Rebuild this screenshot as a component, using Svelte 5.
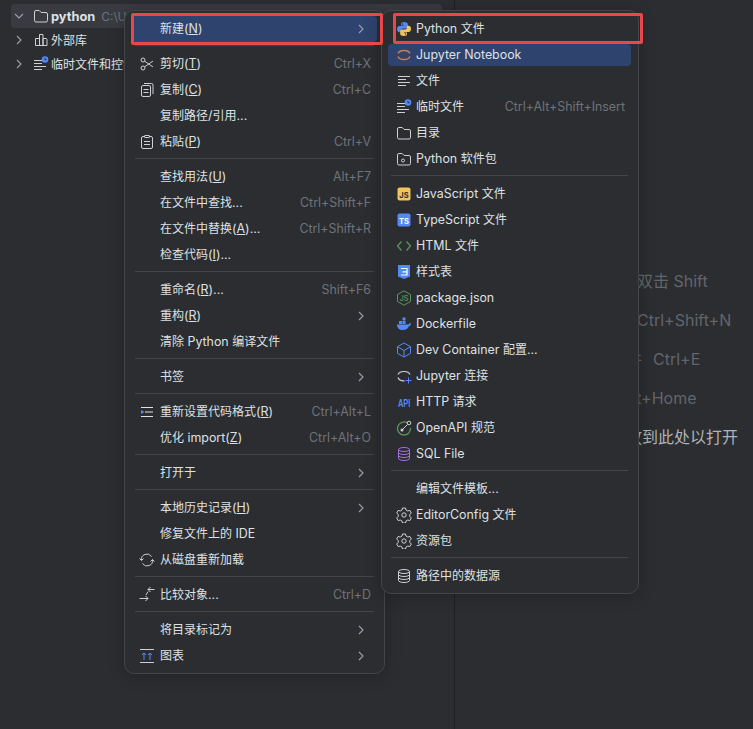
<script>
  const main = [
    [{ label: '新建', key: 'N', sub: true, active: true }],
    [
      { label: '剪切', key: 'T', icon: 'cut', hint: 'Ctrl+X' },
      { label: '复制', key: 'C', icon: 'copy', hint: 'Ctrl+C' },
      { label: '复制路径/引用...' },
      { label: '粘贴', key: 'P', icon: 'paste', hint: 'Ctrl+V' },
    ],
    [
      { label: '查找用法', key: 'U', hint: 'Alt+F7' },
      { label: '在文件中查找...', hint: 'Ctrl+Shift+F' },
      { label: '在文件中替换', key: 'A', tail: '...', hint: 'Ctrl+Shift+R' },
      { label: '检查代码', key: 'I', tail: '...' },
    ],
    [
      { label: '重命名', key: 'R', tail: '...', hint: 'Shift+F6' },
      { label: '重构', key: 'R', sub: true },
      { label: '清除 Python 编译文件' },
    ],
    [{ label: '书签', sub: true }],
    [
      { label: '重新设置代码格式', key: 'R', icon: 'format', hint: 'Ctrl+Alt+L' },
      { label: '优化 import', key: 'Z', hint: 'Ctrl+Alt+O' },
    ],
    [{ label: '打开于', sub: true }],
    [
      { label: '本地历史记录', key: 'H', sub: true },
      { label: '修复文件上的 IDE' },
      { label: '从磁盘重新加载', icon: 'reload' },
    ],
    [{ label: '比较对象...', icon: 'diff', hint: 'Ctrl+D' }],
    [
      { label: '将目录标记为', sub: true },
      { label: '图表', icon: 'diagram', sub: true },
    ],
  ];

  const create = [
    [
      { label: 'Python 文件', icon: 'python' },
      { label: 'Jupyter Notebook', icon: 'jupyter', active: true },
      { label: '文件', icon: 'file' },
      { label: '临时文件', icon: 'scratch', hint: 'Ctrl+Alt+Shift+Insert' },
      { label: '目录', icon: 'folder' },
      { label: 'Python 软件包', icon: 'package' },
    ],
    [
      { label: 'JavaScript 文件', icon: 'js' },
      { label: 'TypeScript 文件', icon: 'ts' },
      { label: 'HTML 文件', icon: 'html' },
      { label: '样式表', icon: 'css' },
      { label: 'package.json', icon: 'node' },
      { label: 'Dockerfile', icon: 'docker' },
      { label: 'Dev Container 配置...', icon: 'cube' },
      { label: 'Jupyter 连接', icon: 'jupyterAdd' },
      { label: 'HTTP 请求', icon: 'api' },
      { label: 'OpenAPI 规范', icon: 'openapi' },
      { label: 'SQL File', icon: 'sql' },
    ],
    [
      { label: '编辑文件模板...' },
      { label: 'EditorConfig 文件', icon: 'gear' },
      { label: '资源包', icon: 'gear' },
    ],
    [{ label: '路径中的数据源', icon: 'db' }],
  ];

  const tips = [
    { name: '随处搜索', key: '双击 Shift' },
    { name: '转到文件', key: 'Ctrl+Shift+N' },
    { name: '最近的文件', key: 'Ctrl+E' },
    { name: '导航栏', key: 'Alt+Home' },
  ];

  // the Han glyphs sit at a slightly smaller size than the Latin ones
  const runs = (text) => text.split(/([\u4e00-\u9fff]+)/).filter(Boolean);
  const isHan = (run) => /[\u4e00-\u9fff]/.test(run);
</script>

{#snippet mixed(text)}
  {#each runs(text) as run}{#if isHan(run)}<span class="han">{run}</span>{:else}{run}{/if}{/each}
{/snippet}

{#snippet icon(name)}
  <svg class="icon" viewBox="0 0 16 16" width="16" height="16" fill="none" stroke="#ced0d6" stroke-width="1">
    {#if name === 'cut'}
      <circle cx="4" cy="4" r="2"/><circle cx="4" cy="12" r="2"/><path d="M5.6 5.2 14 11M5.6 10.8 14 5"/>
    {:else if name === 'copy'}
      <rect x="2.5" y="3.5" width="9" height="11" rx="1.5"/><path d="M5 1.5h7.5A1.5 1.5 0 0 1 14 3v9M4.500 7.500h5M4.500 10.500h5"/>
    {:else if name === 'paste'}
      <rect x="2.5" y="2.5" width="11" height="12" rx="1.5"/><rect x="5.5" y="1.5" width="5" height="2" rx="0.5" fill="#2b2d30"/><path d="M5 7.500h6M5 10.500h6"/>
    {:else if name === 'format'}
      <path d="M2 3.500h12M6 8h8M2 12.500h12" stroke="#dfe1e5"/><path d="M2 6v4l3.500-2z" fill="#548af7" stroke="none"/>
    {:else if name === 'reload'}
      <path d="M2.500 8.500A5.500 5.500 0 0 1 12.500 4.500M13.500 7.500A5.500 5.500 0 0 1 3.500 11.500"/><path d="M.5 6.500l2 2 2-2M11.500 9.500l2-2 2 2"/>
    {:else if name === 'diff'}
      <path d="M15.500 2.500H9M11.500 0 9 2.500 11.500 5M.5 11.500H9M6.500 9 9 11.500 6.500 14M7 8l2-3.500"/>
    {:else if name === 'diagram'}
      <path d="M1 1.500h14M1 14.500h14"/><path d="M5 12V5M3 7l2-2 2 2M11 12V5M9 7l2-2 2 2" stroke="#548af7"/>
    {:else if name === 'python'}
      <path d="M8 1C5.500 1 5 2 5 3v1.500h3.200V5H3.500C2 5 1 6 1 8s1 3.200 2.300 3.200H5V9.500C5 8.300 6 7.500 7 7.500h3c1 0 1.800-.8 1.800-1.800V3c0-1-1.300-2-3.800-2z" fill="#548af7" stroke="none"/>
      <path d="M8 15c2.500 0 3-1 3-2v-1.500H7.800V11h4.700c1.500 0 2.500-1 2.500-3s-1-3.200-2.300-3.200H11v1.700c0 1.200-1 2-2 2H6c-1 0-1.800.8-1.800 1.800V13c0 1 1.300 2 3.800 2z" fill="#f2c55c" stroke="none"/>
      <circle cx="6.500" cy="3" r=".7" fill="#2b2d30" stroke="none"/><circle cx="9.500" cy="13" r=".7" fill="#2b2d30" stroke="none"/>
    {:else if name === 'jupyter'}
      <path d="M2 6.500C3.500 2.500 12.500 2.500 14 6.500M2 9.500C3.500 13.500 12.500 13.500 14 9.500" stroke="#c77d55" stroke-width="1.400"/>
    {:else if name === 'jupyterAdd'}
      <path d="M2 6.500C3.500 2.500 12.500 2.500 14 6.500M2 9.500C3 12 6 13 8.500 12.800" stroke-width="1.200"/>
      <path d="M12.500 9.500v6M9.500 12.500h6" stroke="#548af7"/>
    {:else if name === 'file'}
      <path d="M2 3.500h12M2 6.500h8M2 9.500h12M2 12.500h8"/>
    {:else if name === 'scratch'}
      <path d="M1 4.500h8M1 7.500h8M1 10.500h12M1 13.500h8"/>
      <circle cx="12" cy="3.500" r="3.300" fill="#548af7" stroke="none"/><path d="M12 1.800v2h1.500" stroke="#2b2d30"/>
    {:else if name === 'folder'}
      <path d="M1.500 4A1.500 1.500 0 0 1 3 2.500h3.200l2 2H13A1.500 1.500 0 0 1 14.500 6v6.500A1.500 1.500 0 0 1 13 14H3a1.500 1.500 0 0 1-1.500-1.500z"/>
    {:else if name === 'package'}
      <path d="M1.500 4A1.500 1.500 0 0 1 3 2.500h3.200l2 2H13A1.500 1.500 0 0 1 14.500 6v6.500A1.500 1.500 0 0 1 13 14H3a1.500 1.500 0 0 1-1.500-1.500z"/><circle cx="7" cy="9.500" r="1.500"/>
    {:else if name === 'js' || name === 'ts'}
      <rect x="1.5" y="1.5" width="13" height="13" rx="2" fill={name === 'js' ? '#f2c55c' : '#548af7'} stroke="none"/>
      <text x="8" y="11.500" text-anchor="middle" class="badge" fill={name === 'js' ? '#2b2d30' : '#fff'}>{name.toUpperCase()}</text>
    {:else if name === 'html'}
      <path d="M5.500 3.500 1.500 8l4 4.500M10.500 3.500l4 4.500-4 4.500" stroke="#57965c" stroke-width="1.300"/>
    {:else if name === 'css'}
      <path d="M2 1h12v11.500L8 15l-6-2.500z" fill="#548af7" stroke="none"/><path d="M5 4.500h6V11H5M6.500 7.800H11" stroke="#fff" stroke-width="1.200"/>
    {:else if name === 'node'}
      <path d="M8 .8l6.500 3.700v7L8 15.200l-6.500-3.700v-7z" stroke="#57965c"/>
      <text x="8" y="11" text-anchor="middle" class="badge thin" fill="#57965c">JS</text>
    {:else if name === 'docker'}
      <path d="M1 8.500h11.500c.5-1 1.500-1.500 2.500-1 0 2-1.500 2.500-2 2.500-1 2.500-3 4-6 4-4 0-6-2-6-5.500z" fill="#548af7" stroke="none"/>
      <path d="M3 5h3v3H3zM6.500 5h3v3h-3zM6.500 1.500h3v3h-3z" fill="#548af7" stroke="none"/>
    {:else if name === 'cube'}
      <path d="M8 1l6.500 3.700v6.600L8 15l-6.500-3.700V4.700zM1.500 4.700 8 8.500l6.500-3.800M8 8.500V15" stroke="#548af7"/>
    {:else if name === 'api'}
      <text transform="translate(2 12.500) scale(.93 1.350)" class="api">API</text>
    {:else if name === 'openapi'}
      <path d="M11.500 3A6.500 6.500 0 1 0 14.500 8" stroke="#57965c" stroke-width="1.300"/>
      <path d="M6.500 9.500l5-5"/><circle cx="6" cy="10" r="1.500" fill="#ced0d6" stroke="none"/><circle cx="13" cy="3" r="1.800"/>
    {:else if name === 'sql' || name === 'db'}
      <g stroke={name === 'sql' ? '#a571e6' : '#ced0d6'}>
        <ellipse cx="8" cy="3.500" rx="5.500" ry="2"/>
        <path d="M2.500 3.500v9c0 1.100 2.500 2 5.500 2s5.500-.9 5.500-2v-9M2.500 6.500c0 1.100 2.500 2 5.500 2s5.500-.9 5.500-2M2.500 9.500c0 1.100 2.500 2 5.500 2s5.500-.9 5.500-2"/>
      </g>
    {:else if name === 'gear'}
      <path d="M6.500 1.500h3l.5 2 1.800 1 2-.6 1.500 2.600-1.500 1.500v2l1.500 1.500-1.500 2.600-2-.6-1.800 1-.5 2h-3l-.5-2-1.800-1-2 .6L.7 11.500l1.500-1.500v-2L.7 6.500l1.500-2.600 2 .6 1.800-1z" transform="translate(0 -.5)"/><circle cx="8" cy="8" r="2.200"/>
    {/if}
  </svg>
{/snippet}

{#snippet chevron()}
  <svg class="chev" viewBox="0 0 16 16" width="16" height="16" fill="none" stroke="#9da0a8" stroke-width="1.100">
    <path d="M6 4 10 8 6 12"/>
  </svg>
{/snippet}

{#snippet menu(groups, cls)}
  <div class="menu {cls}">
    {#each groups as group, i}
      {#if i > 0}<div class="sep"></div>{/if}
      {#each group as item}
        <div class="row" class:active={item.active}>
          <span class="slot">{#if item.icon}{@render icon(item.icon)}{/if}</span>
          <span class="label">{@render mixed(item.label)}{#if item.key}(<u>{item.key}</u>){/if}{item.tail ?? ''}</span>
          {#if item.hint}<span class="hint">{item.hint}</span>{/if}
          {#if item.sub}{@render chevron()}{/if}
        </div>
      {/each}
    {/each}
  </div>
{/snippet}

<div class="ide">
  <aside class="tree">
    <div class="node selected">
      <svg class="tw" viewBox="0 0 16 16" width="16" height="16" fill="none" stroke="#9da0a8" stroke-width="1.100"><path d="M4 6 8 10 12 6"/></svg>
      <svg viewBox="0 0 16 16" width="16" height="16" fill="none" stroke="#ced0d6"><path d="M1.500 4A1.500 1.500 0 0 1 3 2.500h3.200l2 2H13A1.500 1.500 0 0 1 14.500 6v6.500A1.500 1.500 0 0 1 13 14H3a1.500 1.500 0 0 1-1.500-1.500z"/></svg>
      <b class="name">python</b><span class="name path">C:\U</span>
    </div>
    <div class="node">
      {@render chevron()}
      <svg viewBox="0 0 16 16" width="16" height="16" fill="none" stroke="#ced0d6"><path d="M2.500 6.500h4v7h-4zM6.500 2.500H10v11H6.500zM10 6.500h3a1 1 0 0 1 1 1v6h-4z"/></svg>
      <span class="name han">外部库</span>
    </div>
    <div class="node">
      {@render chevron()}
      {@render icon('scratch')}
      <span class="name han">临时文件和控制台</span>
    </div>
  </aside>
  <main class="editor">
    <div class="tips">
      {#each tips as tip}
        <div class="tip"><span>{tip.name}</span><span>{tip.key}</span></div>
      {/each}
      <div class="tip drop">将文件拖放到此处以打开</div>
    </div>
  </main>

  {@render menu(main, 'm1')}
  {@render menu(create, 'm2')}

  <div class="mark mark1"></div>
  <div class="mark mark2"></div>
</div>

<style>
  :global(body) {
    margin: 0;
    background: #2b2d30;
  }

  .ide {
    position: relative;
    width: 753px;
    height: 729px;
    display: flex;
    overflow: hidden;
    background: #2b2d30;
    color: #dfe1e5;
    font-family: Inter, "Noto Sans CJK SC", sans-serif;
    font-size: 12.4px;
  }

  .han {
    font-size: 12px;
  }

  .tree {
    width: 455px;
    flex: none;
    box-sizing: border-box;
    padding: 4px 12px 0 11px;
    border-right: 1px solid #1e1f22;
    overflow: hidden;
  }

  .node {
    height: 24px;
    display: flex;
    align-items: center;
    gap: 3px;
    white-space: nowrap;
    overflow: hidden;
    line-height: 22px;
  }

  .node.selected {
    border-radius: 4px;
    background: #393b40;
  }

  .node svg:first-child {
    margin-right: 3px;
  }

  .name {
    padding-top: 2px;
    margin-left: -1px;
  }

  .node b {
    font-size: 12.8px;
    font-weight: 700;
  }

  .path {
    margin-left: 3px;
    color: #6f737a;
    font-size: 12px;
  }

  .editor {
    flex: 1;
    background: #2b2d30;
  }

  .tips {
    padding: 271px 0 0 107px;
    display: flex;
    flex-direction: column;
    gap: 19px;
    font-size: 16px;
    line-height: 20px;
    white-space: nowrap;
    color: #62656b;
  }

  .tip {
    display: flex;
    gap: 11px;
  }

  .tip.drop {
    color: #b0b3b8;
  }

  .menu {
    position: absolute;
    top: 10px;
    box-sizing: border-box;
    padding: 5px 7px 4px;
    background: #2b2d30;
    border: 1px solid #43454a;
    border-radius: 10px;
    box-shadow: 0 2px 16px rgba(0, 0, 0, 0.25);
  }

  .m1 {
    left: 124px;
    width: 261px;
  }

  .m2 {
    left: 381px;
    width: 258px;
    padding-left: 6px;
  }

  .row {
    height: 26px;
    display: flex;
    align-items: center;
    padding: 0 6px 0 7px;
    border-radius: 4px;
    white-space: nowrap;
    line-height: 22px;
    color: #dfe1e5;
  }

  .row.active {
    background: #2e436e;
  }

  .m2 .row {
    padding-left: 8px;
  }

  .m2 .row.active {
    height: 22px;
    margin: 2px 0;
  }

  .slot {
    width: 21px;
    flex: none;
    display: flex;
    align-items: center;
  }

  .m2 .slot {
    width: 20px;
  }

  .label {
    flex: 1;
  }

  .hint {
    color: #6f737a;
  }

  .chev {
    flex: none;
    margin-right: 2px;
  }

  .node .chev {
    margin-right: 3px;
  }

  .sep {
    height: 1px;
    margin: 3px 3px 5px;
    background: #43454a;
  }

  .badge {
    font: 700 7.5px Inter, sans-serif;
    stroke: none;
  }

  .badge.thin {
    font-weight: 500;
  }

  .api {
    font: 700 8px "Liberation Sans", sans-serif;
    fill: #548af7;
    stroke: none;
  }

  .mark {
    position: absolute;
    box-sizing: border-box;
    border: 3px solid #e8474c;
    border-radius: 2px;
  }

  .mark1 {
    left: 131px;
    top: 13px;
    width: 252px;
    height: 32px;
  }

  .mark2 {
    left: 393px;
    top: 13px;
    width: 250px;
    height: 31px;
  }
</style>
